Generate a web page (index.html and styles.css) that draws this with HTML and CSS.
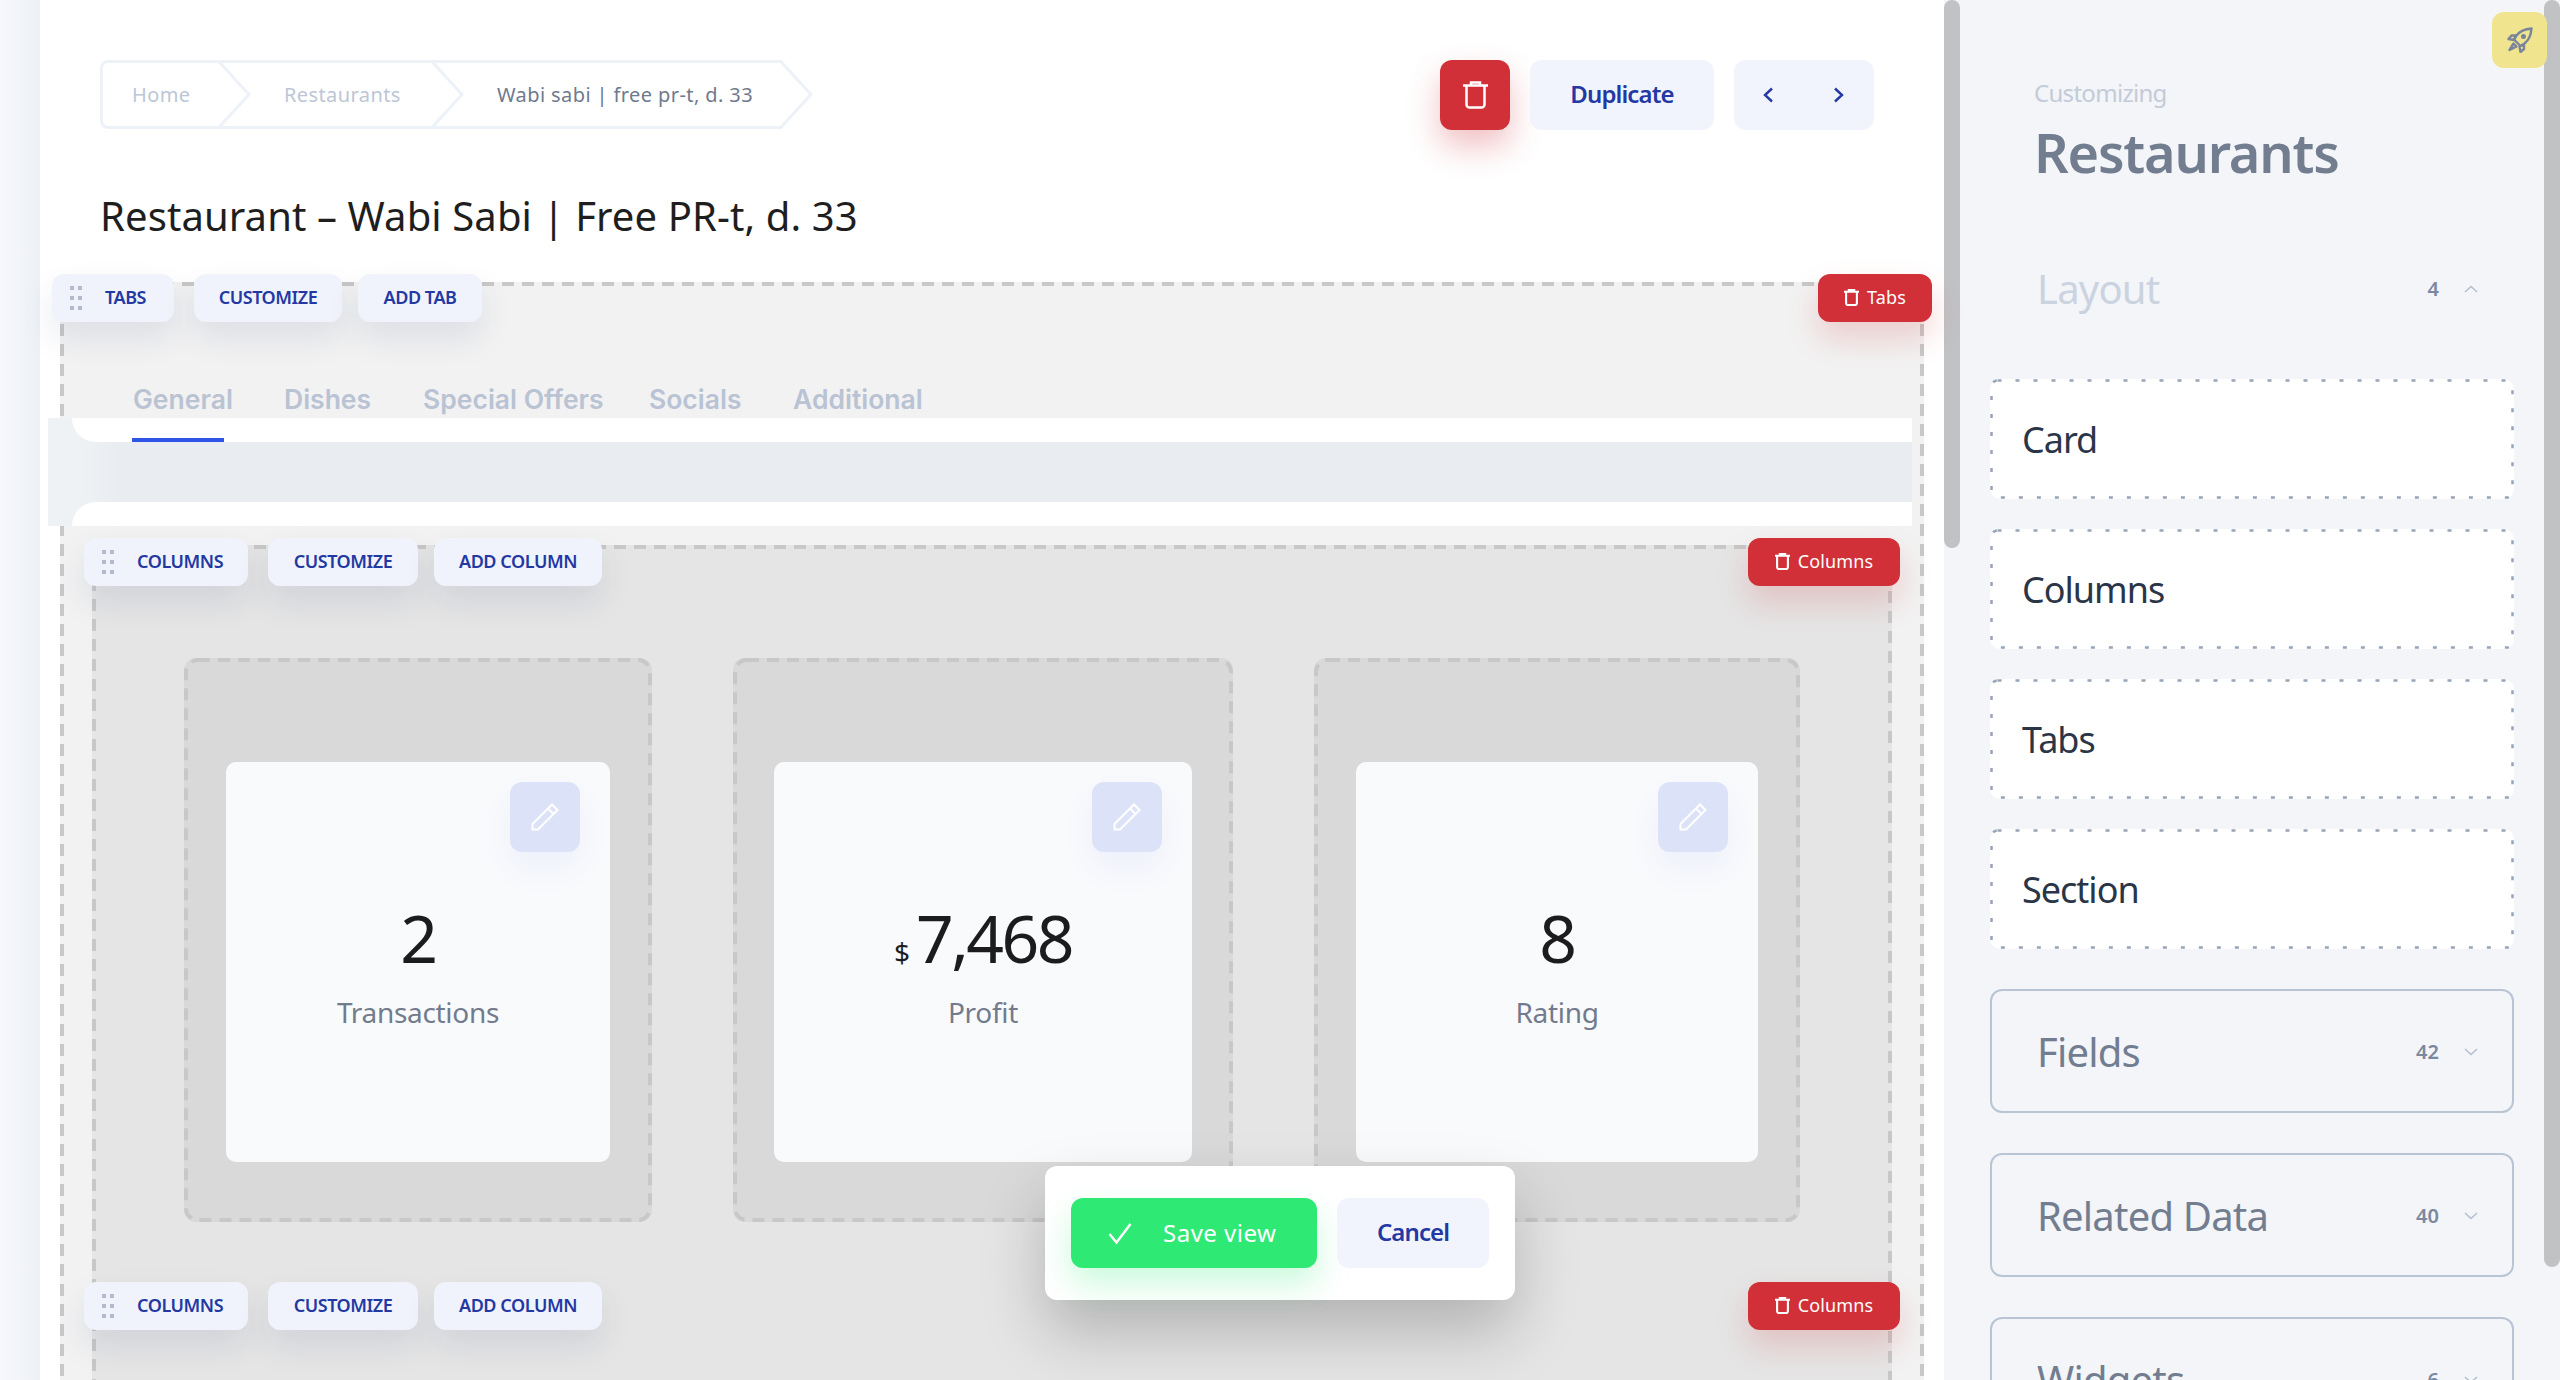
FILE: index.html
```html
<!DOCTYPE html>
<html lang="en">
<head>
  <meta charset="UTF-8">
  <title>Customizing Restaurants</title>
  <link rel="stylesheet" href="styles.css">
</head>
<body>
<div class="app">
  <div class="gutter"></div>

  <main class="main">
    <div class="topbar">
      <nav class="crumbs">
        <span class="crumb crumb-home">Home<svg class="crumb-arrow" viewBox="0 0 34 68"><path d="M1 0 L32 34 L1 68"/></svg></span>
        <span class="crumb crumb-list">Restaurants<svg class="crumb-arrow" viewBox="0 0 34 68"><path d="M1 0 L32 34 L1 68"/></svg></span>
        <span class="crumb crumb-current">Wabi sabi | free pr-t, d. 33<svg class="crumb-arrow" viewBox="0 0 34 68"><path d="M1 0 L32 34 L1 68"/></svg></span>
      </nav>
      <div class="actions">
        <button class="btn-delete"><svg class="trash" viewBox="0 0 25 28"><path d="M0 4.5H25M8 4V1.5h9V4M3.5 5v18.500a3 3 0 0 0 3 3h12a3 3 0 0 0 3-3V5"/></svg></button>
        <button class="btn-soft btn-duplicate">Duplicate</button>
        <div class="btn-soft pager">
          <svg class="chev" viewBox="0 0 10 16"><path d="M9 1.500 L2 8 L9 14.500"/></svg>
          <svg class="chev" viewBox="0 0 10 16"><path d="M1 1.500 L8 8 L1 14.500"/></svg>
        </div>
      </div>
    </div>

    <h1 class="page-title">Restaurant – Wabi Sabi | Free PR-t, d. 33</h1>

    <section class="zone zone-tabs">
      <svg class="dash"><rect/></svg>
      <div class="tools tools-top">
        <span class="tool tool-drag"><svg class="grip" viewBox="0 0 12 24"><path d="M0 0h4v4H0zM8 0h4v4H8zM0 10h4v4H0zM8 10h4v4H8zM0 20h4v4H0zM8 20h4v4H8z"/></svg><span class="tool-tabs">Tabs</span></span>
        <span class="tool tool-custom">Customize</span>
        <span class="tool tool-addtab">Add tab</span>
      </div>
      <span class="btn-remove remove-tabs"><svg class="trash trash-sm" viewBox="0 0 25 28"><path d="M0 4.5H25M8 4V1.500h9V4M3.500 5v18.500a3 3 0 0 0 3 3h12a3 3 0 0 0 3-3V5"/></svg>Tabs</span>

      <div class="tab-row">
        <span class="tab tab-general">General</span>
        <span class="tab tab-dishes">Dishes</span>
        <span class="tab tab-offers">Special Offers</span>
        <span class="tab tab-socials">Socials</span>
        <span class="tab tab-additional">Additional</span>
      </div>
      <div class="well">
        <div class="well-top"><span class="tab-line"></span></div>
        <div class="well-gap"></div>
        <div class="well-bottom"></div>
      </div>

      <section class="zone zone-columns">
        <svg class="dash"><rect/></svg>
        <div class="tools tools-top">
          <span class="tool tool-drag"><svg class="grip" viewBox="0 0 12 24"><path d="M0 0h4v4H0zM8 0h4v4H8zM0 10h4v4H0zM8 10h4v4H8zM0 20h4v4H0zM8 20h4v4H8z"/></svg><span class="tool-cols">Columns</span></span>
          <span class="tool tool-custom">Customize</span>
          <span class="tool tool-addcol">Add column</span>
        </div>
        <span class="btn-remove remove-cols"><svg class="trash trash-sm" viewBox="0 0 25 28"><path d="M0 4.5H25M8 4V1.500h9V4M3.500 5v18.500a3 3 0 0 0 3 3h12a3 3 0 0 0 3-3V5"/></svg>Columns</span>

        <div class="columns">
          <div class="col col-1">
            <svg class="dash dash-round"><rect/></svg>
            <div class="stat">
              <button class="btn-edit"><svg class="pencil" viewBox="0 0 28 28"><path d="M1.500 26.500V21L21 1.500 26.500 7 7 26.500zM17 5.500 22.500 11"/></svg></button>
              <div class="stat-num">2</div>
              <div class="stat-label">Transactions</div>
            </div>
          </div>
          <div class="col col-2">
            <svg class="dash dash-round"><rect/></svg>
            <div class="stat">
              <button class="btn-edit"><svg class="pencil" viewBox="0 0 28 28"><path d="M1.500 26.500V21L21 1.500 26.500 7 7 26.500zM17 5.500 22.500 11"/></svg></button>
              <div class="stat-num"><small class="stat-unit">$</small>7,468</div>
              <div class="stat-label">Profit</div>
            </div>
          </div>
          <div class="col col-3">
            <svg class="dash dash-round"><rect/></svg>
            <div class="stat">
              <button class="btn-edit"><svg class="pencil" viewBox="0 0 28 28"><path d="M1.500 26.500V21L21 1.500 26.500 7 7 26.500zM17 5.500 22.500 11"/></svg></button>
              <div class="stat-num">8</div>
              <div class="stat-label">Rating</div>
            </div>
          </div>
        </div>

        <div class="tools tools-second">
          <span class="tool tool-drag"><svg class="grip" viewBox="0 0 12 24"><path d="M0 0h4v4H0zM8 0h4v4H8zM0 10h4v4H0zM8 10h4v4H8zM0 20h4v4H0zM8 20h4v4H8z"/></svg><span class="tool-cols">Columns</span></span>
          <span class="tool tool-custom">Customize</span>
          <span class="tool tool-addcol">Add column</span>
        </div>
        <span class="btn-remove remove-cols remove-second"><svg class="trash trash-sm" viewBox="0 0 25 28"><path d="M0 4.5H25M8 4V1.500h9V4M3.500 5v18.500a3 3 0 0 0 3 3h12a3 3 0 0 0 3-3V5"/></svg>Columns</span>
      </section>
    </section>
  </main>

  <aside class="side">
    <p class="side-over">Customizing</p>
    <h2 class="side-title">Restaurants</h2>

    <div class="group group-open">
      <span class="group-name">Layout</span>
      <span class="group-count">4</span>
      <svg class="caret" viewBox="0 0 14 8"><path d="M1 7 L7 1.500 L13 7"/></svg>
    </div>
    <div class="items">
      <div class="item"><svg class="dots"><rect/></svg>Card</div>
      <div class="item"><svg class="dots"><rect/></svg>Columns</div>
      <div class="item"><svg class="dots"><rect/></svg>Tabs</div>
      <div class="item"><svg class="dots"><rect/></svg>Section</div>
    </div>
    <div class="groups">
      <div class="group">
        <span class="group-name">Fields</span>
        <span class="group-count">42</span>
        <svg class="caret" viewBox="0 0 14 8"><path d="M1 1 L7 6.500 L13 1"/></svg>
      </div>
      <div class="group">
        <span class="group-name">Related Data</span>
        <span class="group-count">40</span>
        <svg class="caret" viewBox="0 0 14 8"><path d="M1 1 L7 6.500 L13 1"/></svg>
      </div>
      <div class="group">
        <span class="group-name">Widgets</span>
        <span class="group-count">6</span>
        <svg class="caret" viewBox="0 0 14 8"><path d="M1 1 L7 6.500 L13 1"/></svg>
      </div>
    </div>

    <button class="btn-rocket">
      <svg class="rocket" viewBox="0 0 26 26"><path d="M24.500 1.500C18 2 13 4 9.500 8.500L7 12.500l6.500 6.500 4-2.500C22 13 24 8 24.500 1.500z"/><path d="M9 8.500H4.500L1.500 12l5.500 1zM17 17.500v4.500L13.500 25l-1-5.500z"/><path d="M6.500 16.500 2.500 23l7-3.500z"/><circle cx="16.500" cy="9.500" r="1.300"/></svg>
    </button>
  </aside>

  <div class="scroll scroll-main"></div>
  <div class="scroll scroll-side"></div>

  <div class="savebar">
    <button class="btn-save"><svg class="check" viewBox="0 0 24 24"><path d="M1.500 13 L8.500 21.500 L22.500 3"/></svg><span class="btn-save-text">Save view</span></button>
    <button class="btn-soft btn-cancel">Cancel</button>
  </div>
</div>
</body>
</html>
```

FILE: styles.css
```css
* {
  box-sizing: border-box;
}
html, body {
  margin: 0;
  height: 100%;
}
body {
  font-family: "Noto Sans", "Open Sans", sans-serif;
  color: #1e1e1e;
  background: #fff;
}
button {
  font: inherit;
  border: none;
  padding: 0;
  cursor: pointer;
}
.app {
  position: relative;
  display: flex;
  height: 100vh;
  overflow: hidden;
}
.gutter {
  width: 40px;
  flex: none;
  background: linear-gradient(90deg, #f6f8fc, #edf0f5);
}

/* main column */
.main {
  width: 1904px;
  flex: none;
  padding: 60px 70px 0 0;
  background: #fff;
}
.topbar {
  display: flex;
  justify-content: space-between;
  margin-left: 60px;
  height: 70px;
}
.crumbs {
  display: flex;
  height: 69px;
  border: solid #edf1f8;
  border-width: 3px 0 3px 3px;
  border-radius: 8px 0 0 8px;
  font-size: 20px;
  letter-spacing: 0.4px;
}
.crumb {
  position: relative;
  display: flex;
  align-items: center;
  padding-left: 65px;
  color: #bcc6d6;
  white-space: nowrap;
}
.crumb-home {
  width: 116px;
  padding-left: 29px;
}
.crumb-list {
  width: 213px;
}
.crumb-current {
  width: 349px;
  color: #6f7a8d;
}
.crumb-arrow {
  position: absolute;
  right: -32px;
  top: -3px;
  width: 34px;
  height: 69px;
  fill: #fff;
  stroke: #edf1f8;
  stroke-width: 3;
}
.actions {
  display: flex;
  gap: 20px;
}
.btn-delete {
  display: flex;
  align-items: center;
  justify-content: center;
  width: 70px;
  height: 70px;
  border-radius: 12px;
  background: #d13038;
  box-shadow: 0 16px 32px rgba(209, 48, 56, 0.3);
}
.trash {
  width: 25px;
  height: 28px;
  fill: none;
  stroke: #fff;
  stroke-width: 2.5;
}
.trash-sm {
  width: 15px;
  height: 17px;
  stroke-width: 3.5;
}
.btn-soft {
  height: 70px;
  padding-bottom: 4px;
  border-radius: 12px;
  background: #f1f4fc;
  color: #2338a3;
  font-size: 24px;
  font-weight: 600;
  letter-spacing: -0.9px;
}
.btn-duplicate {
  width: 184px;
}
.pager {
  display: flex;
  align-items: center;
  justify-content: space-between;
  width: 140px;
  padding: 0 30px 0 29px;
}
.chev {
  width: 10px;
  height: 16px;
  fill: none;
  stroke: #2338a3;
  stroke-width: 2.400;
}
.page-title {
  margin: 62px 0 0 60px;
  font-size: 40px;
  line-height: 48px;
  font-weight: 400;
  letter-spacing: 0.1px;
}

/* dashed drop zones */
.zone {
  position: relative;
  background: rgba(0, 0, 0, 0.05);
  padding: 4px;
}
.zone-tabs {
  margin: 42px -50px 0 20px;
  height: 1200px;
}
.zone-columns {
  margin: 19px 28px 0;
  height: 1000px;
}
.dash {
  position: absolute;
  left: 0;
  top: 0;
  width: 100%;
  height: 100%;
  fill: none;
  stroke: #c8c8c8;
  stroke-width: 4;
  stroke-dasharray: 12 8;
  pointer-events: none;
}
.dash rect {
  x: 2px;
  y: 2px;
  width: calc(100% - 4px);
  height: calc(100% - 4px);
}
.dash-round rect {
  rx: 12px;
}
.tools {
  position: absolute;
  left: -8px;
  display: flex;
  gap: 16px;
  z-index: 2;
}
.tools-top {
  top: -8px;
}
.tools-second {
  top: 737px;
}
.zone-columns > .tools-top {
  top: -7px;
}
.tool {
  display: flex;
  align-items: center;
  justify-content: center;
  height: 48px;
  padding: 0 20px 2px;
  border-radius: 12px;
  background: #f0f3fb;
  color: #2338a3;
  font-size: 18px;
  font-weight: 600;
  text-transform: uppercase;
  letter-spacing: -0.45px;
  box-shadow: 0 16px 32px rgba(40, 60, 120, 0.1);
}
.tool-drag {
  justify-content: flex-start;
  gap: 23px;
  padding: 0 0 0 18px;
  width: 122px;
}
.zone-columns .tool-drag {
  width: 164px;
}
.zone-tabs > .tools .tool-custom {
  margin-left: 4px;
}
.tool-tabs, .tool-cols {
  padding-bottom: 2px;
}
.tool-custom {
  width: 148px;
}
.tool-addtab {
  width: 124px;
}
.tool-addcol {
  width: 168px;
}
.zone-columns .tool-custom {
  margin-left: 4px;
  width: 150px;
}
.grip {
  width: 12px;
  height: 24px;
  fill: #b4bacb;
}
.btn-remove {
  position: absolute;
  top: -8px;
  right: -8px;
  z-index: 2;
  display: flex;
  align-items: center;
  justify-content: center;
  gap: 8px;
  height: 48px;
  padding-bottom: 2px;
  border-radius: 12px;
  background: #d13038;
  color: #fff;
  font-size: 18px;
  letter-spacing: 0.1px;
  box-shadow: 0 16px 32px rgba(209, 48, 56, 0.2);
}
.remove-tabs {
  width: 114px;
}
.remove-cols {
  width: 152px;
  top: -7px;
}
.remove-second {
  top: 737px;
}

/* tabs */
.tab-row {
  display: flex;
  height: 132px;
  padding: 95px 0 0 69px;
  font-family: Inter, sans-serif;
  font-size: 26.500px;
  line-height: 36px;
  font-weight: 600;
  color: #b9c3d3;
}
.tab-general {
  width: 151px;
}
.tab-dishes {
  width: 139px;
}
.tab-offers {
  width: 226px;
}
.tab-socials {
  width: 144px;
}
.well {
  position: relative;
  margin: 0 8px 0 -16px;
  padding-left: 24px;
  background: linear-gradient(90deg, #eff2f5 0, #eff2f5 30px, #e9ecf0 72px);
}
.well-top {
  display: flex;
  align-items: flex-end;
  height: 24px;
  padding-left: 60px;
  background: #fff;
  border-bottom-left-radius: 24px;
}
.tab-line {
  width: 92px;
  height: 4px;
  background: #2f55e8;
}
.well-gap {
  height: 60px;
}
.well-bottom {
  height: 24px;
  background: #fff;
  border-top-left-radius: 24px;
}

/* columns */
.columns {
  display: flex;
  gap: 81px;
  padding: 109px 0 0 88px;
}
.col {
  position: relative;
  height: 564px;
  padding: 104px 42px 60px;
  background: #d9d9d9;
  border-radius: 12px;
}
.col-1 {
  width: 468px;
}
.col-2 {
  width: 500px;
  padding: 104px 41px 60px;
}
.col-3 {
  width: 486px;
}
.stat {
  position: relative;
  height: 400px;
  padding-top: 135px;
  text-align: center;
  background: #f9fafc;
  border-radius: 10px;
}
.btn-edit {
  position: absolute;
  top: 20px;
  right: 30px;
  display: flex;
  align-items: center;
  justify-content: center;
  width: 70px;
  height: 70px;
  border-radius: 12px;
  background: #dce3f9;
  box-shadow: 0 16px 32px rgba(47, 85, 232, 0.06);
}
.pencil {
  width: 28px;
  height: 28px;
  fill: none;
  stroke: #fff;
  stroke-width: 2;
}
.stat-num {
  height: 80px;
  font-size: 66px;
  line-height: 80px;
  color: #1c1c1e;
  letter-spacing: -2.500px;
}
.stat-unit {
  font-size: 28px;
  line-height: 0;
  letter-spacing: 0;
  margin-right: 6px;
}
.stat-label {
  margin-top: 15px;
  font-size: 28px;
  line-height: 40px;
  color: #727b8d;
  letter-spacing: -0.3px;
}

/* sidebar */
.side {
  position: relative;
  flex: 1;
  padding: 78px 46px 0;
  background: #f3f5f9;
}
.side-over {
  margin: 0 0 0 44px;
  font-size: 24px;
  line-height: 30px;
  color: #c3cbd8;
  letter-spacing: -0.7px;
}
.side-title {
  margin: 8px 0 0 44px;
  font-size: 54px;
  line-height: 72px;
  font-weight: 600;
  color: #727e90;
  letter-spacing: -1.200px;
}
.group {
  display: flex;
  align-items: center;
  height: 124px;
  padding: 0 34px 0 45px;
  border: 2px solid #b9c5d4;
  border-radius: 12px;
}
.group-open {
  margin-top: 39px;
  height: 122px;
  border-color: transparent;
}
.group-name {
  flex: 1;
  font-size: 40px;
  color: #727e90;
  letter-spacing: -0.8px;
}
.group-open .group-name {
  color: #cad3df;
}
.group-count {
  margin-right: 25px;
  font-size: 20px;
  font-weight: 600;
  color: #7a899f;
}
.caret {
  width: 14px;
  height: 8px;
  margin-top: 2px;
  fill: none;
  stroke: #b4bfce;
  stroke-width: 1.500;
}
.items {
  display: flex;
  flex-direction: column;
  gap: 30px;
  margin-top: 30px;
}
.item {
  position: relative;
  display: flex;
  align-items: center;
  height: 120px;
  padding-left: 32px;
  background: #fff;
  border-radius: 10px;
  color: #2a3548;
  font-size: 36px;
  letter-spacing: -1px;
}
.dots {
  position: absolute;
  left: 0;
  top: 0;
  width: 100%;
  height: 100%;
  fill: none;
  stroke: #98a4b7;
  stroke-width: 2.500;
  stroke-dasharray: 4 14;
}
.dots rect {
  x: 1.500px;
  y: 1.500px;
  width: calc(100% - 3px);
  height: calc(100% - 3px);
  rx: 6px;
}
.groups {
  display: flex;
  flex-direction: column;
  gap: 40px;
  margin-top: 40px;
}
.btn-rocket {
  position: absolute;
  top: 12px;
  right: 13px;
  z-index: 3;
  display: flex;
  align-items: center;
  justify-content: center;
  width: 55px;
  height: 56px;
  border-radius: 12px;
  background: #f1e48e;
}
.rocket {
  width: 26px;
  height: 26px;
  fill: none;
  stroke: #78859a;
  stroke-width: 2.400;
  stroke-linejoin: round;
}

/* scrollbars drawn over the panels */
.scroll {
  position: absolute;
  top: 0;
  width: 16px;
  background: #c1c2c4;
  border-radius: 8px;
}
.scroll-main {
  left: 1944px;
  height: 548px;
}
.scroll-side {
  left: 2544px;
  height: 1267px;
}

/* floating save bar */
.savebar {
  position: absolute;
  left: 1045px;
  top: 1166px;
  z-index: 4;
  display: flex;
  gap: 20px;
  width: 470px;
  height: 134px;
  padding: 32px 26px;
  background: #fff;
  border-radius: 12px;
  box-shadow: 0 32px 64px rgba(0, 0, 0, 0.22);
}
.btn-save {
  display: flex;
  align-items: center;
  width: 246px;
  height: 70px;
  padding-left: 37px;
  border-radius: 12px;
  background: #2eea74;
  color: #fff;
  font-size: 24px;
  letter-spacing: 0.5px;
  box-shadow: 0 16px 32px rgba(46, 234, 116, 0.25);
}
.btn-save-text {
  padding-bottom: 2px;
}
.check {
  width: 24px;
  height: 26px;
  margin-right: 31px;
  fill: none;
  stroke: #fff;
  stroke-width: 2.500;
}
.btn-cancel {
  width: 152px;
}
```
